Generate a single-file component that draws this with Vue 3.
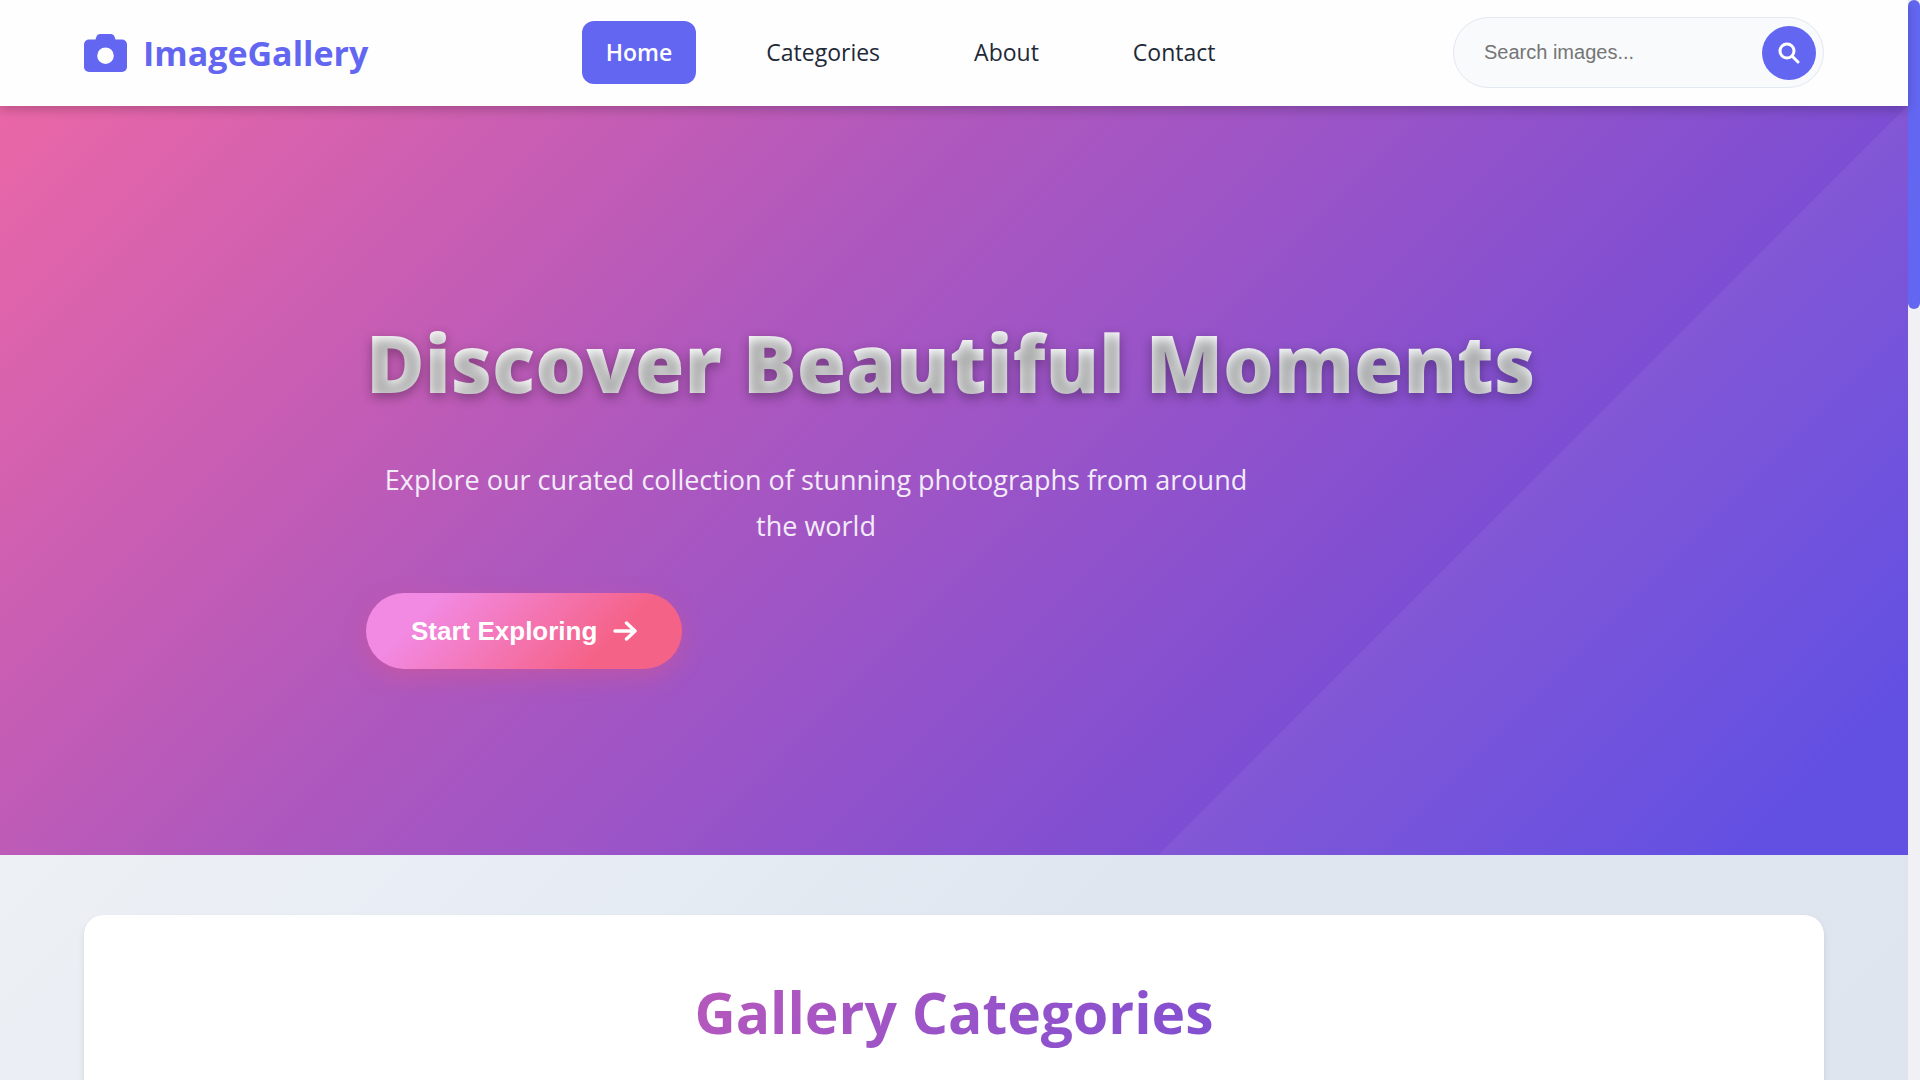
<template>
  <div class="viewport">
    <div class="page">
      <header class="header">
        <a class="logo" href="#home">
          <svg class="logo-icon" viewBox="0 0 43 38" aria-hidden="true">
            <path
              fill-rule="evenodd"
              d="M5 5.5h6.500l1-3a3.600 3.600 0 0 1 3.500-2.500h11a3.600 3.600 0 0 1 3.500 2.500l1 3H38a5 5 0 0 1 5 5V33a5 5 0 0 1-5 5H5a5 5 0 0 1-5-5V10.500a5 5 0 0 1 5-5zM21.500 13.400a8.300 8.300 0 1 0 0 16.600a8.300 8.300 0 0 0 0-16.600z"
            />
          </svg>
          <span>ImageGallery</span>
        </a>

        <nav class="nav">
          <a
            v-for="link in links"
            :key="link.id"
            :href="'#' + link.id"
            class="nav-link"
            :class="{ active: link.id === activeLink }"
            @click="activeLink = link.id"
          >{{ link.label }}</a>
        </nav>

        <form class="search" @submit.prevent>
          <input v-model="query" type="text" placeholder="Search images..." aria-label="Search images" />
          <button type="submit" aria-label="Search">
            <svg viewBox="0 0 22 22" aria-hidden="true">
              <circle cx="9" cy="9" r="7" />
              <path d="M14 14l6 6" />
            </svg>
          </button>
        </form>
      </header>

      <section id="home" class="hero">
        <div class="hero-content">
          <h1>Discover Beautiful Moments</h1>
          <p>Explore our curated collection of stunning photographs from around the world</p>
          <button class="cta" type="button">
            Start Exploring
            <svg viewBox="0 0 24 22" aria-hidden="true">
              <path d="M2 11h20M13.500 3l8.500 8-8.500 8" />
            </svg>
          </button>
        </div>
      </section>

      <main class="main">
        <section id="categories" class="gallery">
          <h2>Gallery Categories</h2>
        </section>
      </main>
    </div>

    <div class="scrollbar" aria-hidden="true">
      <div class="scrollbar-thumb"></div>
    </div>
  </div>
</template>

<script setup>
import { ref } from 'vue';

const links = [
  { id: 'home', label: 'Home' },
  { id: 'categories', label: 'Categories' },
  { id: 'about', label: 'About' },
  { id: 'contact', label: 'Contact' },
];

const activeLink = ref('home');
const query = ref('');
</script>

<style>
body {
  margin: 0;
}
</style>

<style scoped>
* {
  box-sizing: border-box;
}

.viewport {
  display: flex;
  height: 100vh;
  overflow: hidden;
  font-family: 'Segoe UI', 'Open Sans', sans-serif;
  color: #1f2937;
}

.page {
  flex: 1;
  min-width: 0;
  display: flex;
  flex-direction: column;
}

.header {
  position: relative;
  z-index: 1;
  display: flex;
  align-items: center;
  justify-content: space-between;
  padding: 17px 84px 18px;
  background: #fefefe;
  box-shadow: 0 4px 10px rgba(0, 0, 0, 0.2);
}

.logo {
  display: flex;
  align-items: center;
  gap: 16px;
  color: #6366f1;
  font-size: 34px;
  line-height: 48px;
  font-weight: 700;
  text-decoration: none;
}

.logo-icon {
  width: 43px;
  height: 38px;
  fill: currentColor;
}

.nav {
  display: flex;
  gap: 46px;
}

.nav-link {
  padding: 16px 24px;
  border-radius: 12px;
  color: #1f2937;
  font-size: 23px;
  line-height: 31px;
  font-weight: 500;
  text-decoration: none;
}

.nav-link.active {
  background: #6366f1;
  color: #fff;
  font-weight: 600;
}

.search {
  display: flex;
  align-items: center;
  width: 371px;
  height: 71px;
  padding: 0 7px 0 30px;
  border: 1px solid #e2e8f0;
  border-radius: 36px;
  background: #f8fafc;
}

.search input {
  flex: 1;
  min-width: 0;
  padding: 0;
  border: none;
  outline: none;
  background: none;
  font-family: 'Liberation Sans', Arial, sans-serif;
  font-size: 20px;
}

.search input::placeholder {
  color: #757575;
}

.search button {
  display: flex;
  align-items: center;
  justify-content: center;
  width: 54px;
  height: 54px;
  padding: 0;
  border: none;
  border-radius: 50%;
  background: #6366f1;
}

.search svg {
  width: 22px;
  height: 22px;
  fill: none;
  stroke: #fff;
  stroke-width: 3;
  stroke-linecap: round;
}

.hero {
  display: flex;
  align-items: center;
  justify-content: center;
  min-height: 749px;
  flex-shrink: 0;
  background:
    linear-gradient(135deg, transparent 71.8%, rgba(255, 255, 255, 0.05) 71.8%, transparent 94%),
    linear-gradient(135deg, #ea67a7 0%, #c65db4 23%, #b058bd 36%, #9b54c7 51%, #7c4ed3 72%, #6250e3 94%);
}

.hero-content {
  display: flex;
  flex-direction: column;
  align-items: flex-start;
  min-width: 1176px;
}

h1 {
  margin: 0 0 26px;
  background: linear-gradient(135deg, #fff 0%, #f8fafc 100%);
  background-clip: text;
  color: transparent;
  font-size: 80px;
  line-height: 138px;
  font-weight: 800;
  text-shadow: 0 4px 12px rgba(0, 0, 0, 0.32);
}

.hero p {
  max-width: 900px;
  margin: 0 0 44px;
  color: #f3ebf8;
  font-size: 27px;
  line-height: 46px;
  text-align: center;
}

.cta {
  display: flex;
  align-items: center;
  gap: 16px;
  padding: 22px 45px;
  border: none;
  border-radius: 38px;
  background: linear-gradient(135deg, #f289e2 20%, #f56287 75%);
  box-shadow: 0 8px 24px rgba(245, 87, 108, 0.3);
  color: #fff;
  font-family: 'Liberation Sans', Arial, sans-serif;
  font-size: 26px;
  line-height: 32px;
  font-weight: 700;
}

.cta svg {
  width: 24px;
  height: 22px;
  fill: none;
  stroke: currentColor;
  stroke-width: 3.400;
  stroke-linecap: round;
  stroke-linejoin: round;
}

.main {
  padding: 60px 84px;
  background: linear-gradient(135deg, #edf0f4 0%, #e8edf5 18%, #dfe6ef 40%, #dfe4ee 100%);
}

.gallery {
  min-height: 900px;
  padding: 60px;
  border-radius: 20px;
  background: #fff;
  box-shadow: 0 4px 6px rgba(0, 0, 0, 0.1);
  text-align: center;
}

h2 {
  margin: 0;
  background: linear-gradient(135deg, #ee68a6 0%, #b958bb 32%, #9b54c8 50%, #7c4ed3 70%, #6250e3 100%);
  background-clip: text;
  color: transparent;
  font-size: 57px;
  line-height: 74px;
  font-weight: 700;
}

.scrollbar {
  width: 12px;
  background: #f1f0f4;
}

.scrollbar-thumb {
  height: 28.6%;
  border-radius: 6px;
  background: #6366f1;
}
</style>
